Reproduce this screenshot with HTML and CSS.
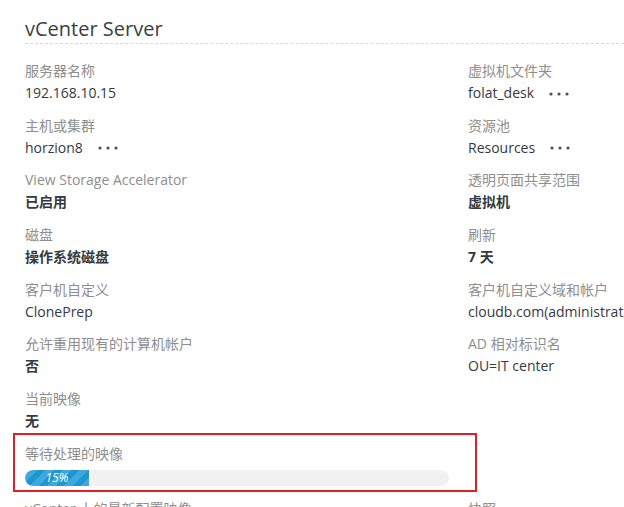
FILE: index.html
```html
<!DOCTYPE html>
<html lang="zh-CN">
<head>
<meta charset="utf-8">
<title>vCenter Server</title>
<link rel="stylesheet" href="styles.css">
</head>
<body>
<div class="panel">
  <h1 class="title">vCenter Server</h1>
  <div class="grid">
    <div class="item"><div class="label">服务器名称</div><div class="value">192.168.10.15</div></div>
    <div class="item"><div class="label">虚拟机文件夹</div><div class="value">folat_desk<span class="more"><svg width="20" height="6" viewBox="0 0 20 6"><circle cx="2" cy="3" r="1.6"/><circle cx="10" cy="3" r="1.6"/><circle cx="18" cy="3" r="1.6"/></svg></span></div></div>

    <div class="item"><div class="label">主机或集群</div><div class="value">horzion8<span class="more"><svg width="20" height="6" viewBox="0 0 20 6"><circle cx="2" cy="3" r="1.6"/><circle cx="10" cy="3" r="1.6"/><circle cx="18" cy="3" r="1.6"/></svg></span></div></div>
    <div class="item"><div class="label">资源池</div><div class="value">Resources<span class="more"><svg width="20" height="6" viewBox="0 0 20 6"><circle cx="2" cy="3" r="1.6"/><circle cx="10" cy="3" r="1.6"/><circle cx="18" cy="3" r="1.6"/></svg></span></div></div>

    <div class="item"><div class="label">View Storage Accelerator</div><div class="value bold">已启用</div></div>
    <div class="item"><div class="label">透明页面共享范围</div><div class="value bold">虚拟机</div></div>

    <div class="item"><div class="label">磁盘</div><div class="value bold">操作系统磁盘</div></div>
    <div class="item"><div class="label">刷新</div><div class="value bold">7 天</div></div>

    <div class="item"><div class="label">客户机自定义</div><div class="value">ClonePrep</div></div>
    <div class="item"><div class="label">客户机自定义域和帐户</div><div class="value">cloudb.com(administrator)</div></div>

    <div class="item"><div class="label">允许重用现有的计算机帐户</div><div class="value bold">否</div></div>
    <div class="item"><div class="label">AD 相对标识名</div><div class="value">OU=IT center</div></div>

    <div class="item"><div class="label">当前映像</div><div class="value bold">无</div></div>
    <div class="item"></div>

    <div class="item pending">
      <div class="label">等待处理的映像</div>
      <div class="bar"><div class="fill" style="width: 15%"><span class="pct">15%</span></div></div>
      <div class="highlight"></div>
    </div>
    <div class="item"></div>

    <div class="item"><div class="label">vCenter 上的最新配置映像</div><div class="value">-</div></div>
    <div class="item"><div class="label">快照</div><div class="value">-</div></div>
  </div>
</div>
</body>
</html>
```

FILE: styles.css
```css
html, body {
  margin: 0;
  padding: 0;
  background: #ffffff;
  overflow: hidden;
}

body {
  font-family: "Open Sans", "Noto Sans CJK SC", sans-serif;
  color: #333a42;
  width: 624px;
  height: 507px;
}

.panel {
  padding-left: 25px;
}

.title {
  margin: 17px 0 0 0;
  padding-bottom: 2px;
  font-size: 20px;
  line-height: 24px;
  font-weight: 400;
  color: #3b3f44;
  border-bottom: 1px dashed #d9d9d9;
  white-space: nowrap;
}

.grid {
  margin-top: 17px;
  display: grid;
  grid-template-columns: 443px 1fr;
  grid-auto-rows: 40px;
  row-gap: 14.7px;
}

.item {
  position: relative;
  white-space: nowrap;
  min-width: 0;
}

.label {
  font-size: 14px;
  line-height: 20px;
  color: #8e8e8e;
}

.value {
  margin-top: 2px;
  font-size: 14px;
  line-height: 20px;
  color: #333a42;
  display: flex;
  align-items: center;
}

.value.bold {
  font-weight: 700;
}

.more {
  display: inline-flex;
  margin-left: 15px;
  margin-top: 1px;
}

.more svg {
  fill: #4a4f55;
}

.bar {
  margin-top: 6px;
  width: 424px;
  height: 16px;
  border-radius: 8px;
  background: #f1f1f1;
  overflow: hidden;
}

.fill {
  height: 100%;
  border-radius: 8px 0 0 8px;
  background-color: #1c97d3;
  background-image: repeating-linear-gradient(-45deg,
    rgba(255, 255, 255, 0.16) 0px,
    rgba(255, 255, 255, 0.16) 6px,
    rgba(255, 255, 255, 0) 6px,
    rgba(255, 255, 255, 0) 12px);
  display: flex;
  align-items: center;
  justify-content: center;
}

.pct {
  color: #ffffff;
  font-size: 12px;
  font-style: italic;
  line-height: 16px;
}

.highlight {
  position: absolute;
  top: -11px;
  left: -12px;
  right: -9px;
  bottom: -8px;
  border: 2px solid #e31e26;
  pointer-events: none;
}
```
